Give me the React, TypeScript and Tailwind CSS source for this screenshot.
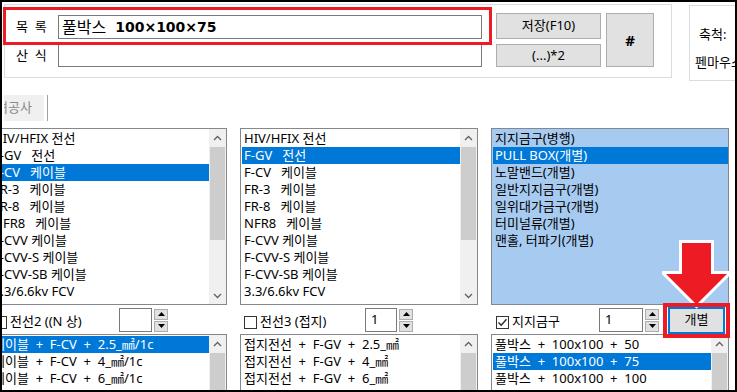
import React from "react";

const CABLES = [
  "HIV/HFIX 전선",
  "F-GV   전선",
  "F-CV   케이블",
  "FR-3   케이블",
  "FR-8   케이블",
  "NFR8   케이블",
  "F-CVV 케이블",
  "F-CVV-S 케이블",
  "F-CVV-SB 케이블",
  "3.3/6.6kv FCV",
];

const SUPPORTS = [
  "지지금구(병행)",
  "PULL BOX(개별)",
  "노말밴드(개별)",
  "일반지지금구(개별)",
  "일위대가금구(개별)",
  "터미널류(개별)",
  "맨홀, 터파기(개별)",
];

const WIRE2 = ["케이블  +  F-CV  +  2.5_㎟/1c", "케이블  +  F-CV  +  4_㎟/1c", "케이블  +  F-CV  +  6_㎟/1c"];
const WIRE3 = ["접지전선  +  F-GV  +  2.5_㎟", "접지전선  +  F-GV  +  4_㎟", "접지전선  +  F-GV  +  6_㎟"];
const BOXES = ["풀박스  +  100x100  +  50", "풀박스  +  100x100  +  75", "풀박스  +  100x100  +  100"];

function Chevron({ down }: { down?: boolean }) {
  return (
    <svg width="9" height="6" viewBox="0 0 9 6" className={down ? "rotate-180" : ""}>
      <path d="M1 5 L4.5 1.5 L8 5" fill="none" stroke="#606060" strokeWidth="1.3" />
    </svg>
  );
}

function ScrollBar({ thumb }: { thumb: string }) {
  return (
    <div className="flex w-[17px] shrink-0 flex-col bg-[#f0f0f0]">
      <div className="flex h-[17px] shrink-0 items-center justify-center">
        <Chevron />
      </div>
      <div className={`mx-[1px] mt-[1px] shrink-0 bg-[#cdcdcd] ${thumb}`} />
      <div className="flex-1" />
      <div className="flex h-[17px] shrink-0 items-center justify-center">
        <Chevron down />
      </div>
    </div>
  );
}

function ListBox({
  items,
  selected,
  blue,
  thumb,
  h,
}: {
  items: string[];
  selected: number;
  blue?: boolean;
  thumb?: string;
  h: string;
}) {
  return (
    <div className={`flex overflow-hidden border border-[#828790] ${blue ? "bg-[#a6caf0]" : "bg-white"} ${h}`}>
      <div className="min-w-0 flex-1 overflow-hidden pl-[1px] pt-[1px]">
        {items.map((t, i) => (
          <div
            key={i}
            className={`h-[17px] whitespace-pre pl-[2px] leading-[17px] ${
              i === selected ? "bg-[#0078d7] text-white" : "text-black"
            }`}
          >
            {t}
          </div>
        ))}
      </div>
      {thumb && <ScrollBar thumb={thumb} />}
    </div>
  );
}

function CheckBox({ checked }: { checked?: boolean }) {
  return (
    <div className="flex h-[13px] w-[13px] shrink-0 items-center justify-center border border-[#333] bg-white">
      {checked && (
        <svg width="11" height="11" viewBox="0 0 11 11">
          <path d="M1.5 5.5 L4.2 8.3 L9.5 2.2" fill="none" stroke="#222" strokeWidth="1.3" />
        </svg>
      )}
    </div>
  );
}

function Spin() {
  const btn = "flex h-[11px] w-[14px] items-center justify-center border border-[#adadad] bg-[#e1e1e1]";
  return (
    <div className="ml-[2px] flex flex-col gap-[1px]">
      <div className={btn}>
        <svg width="7" height="4" viewBox="0 0 7 4">
          <path d="M0 4 L3.5 0 L7 4 Z" fill="#000" />
        </svg>
      </div>
      <div className={btn}>
        <svg width="7" height="4" viewBox="0 0 7 4">
          <path d="M0 0 L3.5 4 L7 0 Z" fill="#000" />
        </svg>
      </div>
    </div>
  );
}

function Controls({
  ml,
  labelW,
  inputW,
  label,
  value,
  checked,
  children,
}: {
  ml: string;
  labelW: string;
  inputW: string;
  label: string;
  value: string;
  checked?: boolean;
  children?: React.ReactNode;
}) {
  return (
    <div className="mt-[3px] flex h-[24px] items-center">
      <div className={`${ml} mt-[4px]`}>
        <CheckBox checked={checked} />
      </div>
      <div className={`ml-[3px] mt-[3px] whitespace-pre text-[13px] leading-[17px] ${labelW}`}>{label}</div>
      <div className={`flex h-[24px] items-center border border-[#7a7a7a] bg-white pl-[5px] text-[13px] ${inputW}`}>
        {value}
      </div>
      <Spin />
      {children}
    </div>
  );
}

function Button({ className, children }: { className: string; children: React.ReactNode }) {
  return (
    <div className={`flex items-center justify-center border border-[#adadad] bg-[#e1e1e1] text-[13px] text-black ${className}`}>
      {children}
    </div>
  );
}

export default function App() {
  return (
    <div className="relative h-[392px] w-[737px] overflow-hidden border-2 border-black bg-white font-['Noto_Sans','Noto_Sans_CJK_KR',sans-serif] text-[13px] text-black">
      {/* header panels */}
      <div className="flex h-[79px] items-start">
        <div className="ml-[2px] mt-[2px] flex h-[74px] w-[668px] shrink-0 items-start border border-[#dcdcdc] pl-[10px] pt-[8px]">
          <div className="flex flex-col">
            <div className="mt-[2px] flex h-[24px] items-center">
              <div className="w-[43px] whitespace-pre pl-[1px] text-[13px]">목  록</div>
              <div className="flex h-[24px] w-[424px] items-center border border-[#7a7a7a] bg-white pl-[3px]">
                <span className="text-[16px]">풀박스</span>
                <span className="ml-[9px] font-['DejaVu_Sans','Noto_Sans_CJK_KR',sans-serif] text-[14px] font-bold">
                  100×100×75
                </span>
              </div>
            </div>
            <div className="mt-[5px] flex h-[23px] items-center">
              <div className="w-[43px] whitespace-pre pl-[1px] text-[13px]">산  식</div>
              <div className="h-[23px] w-[424px] border border-[#7a7a7a] bg-white" />
            </div>
          </div>
          <div className="ml-[14px] flex flex-col">
            <Button className="h-[26px] w-[105px]">저장(F10)</Button>
            <Button className="mt-[5px] h-[23px] w-[105px]">(...)*2</Button>
          </div>
          <Button className="ml-[5px] h-[54px] w-[48px] text-[15px] font-bold">#</Button>
        </div>
        <div className="ml-[17px] mt-[3px] flex h-[76px] w-[80px] shrink-0 flex-col border border-[#dcdcdc] pl-[5px] pt-[14px] leading-[28px]">
          <div className="pl-[4px]">축척:</div>
          <div>펜마우스</div>
        </div>
      </div>

      {/* tab strip */}
      <div className="mt-[14px] flex h-[26px] items-stretch">
        <div className="ml-[2px] flex w-[40px] items-center overflow-hidden bg-[#f0f0f0] text-[#8a8a8a]">
          <span className="-ml-[8px] whitespace-nowrap">녀공사</span>
        </div>
        <div className="ml-[3px] w-[1px] bg-[#a0a0a0]" />
      </div>

      {/* three list columns */}
      <div className="-ml-[13px] mt-[7px] grid grid-cols-[238px_238px_238px] gap-x-[13px]">
        <div className="flex flex-col">
          <ListBox items={CABLES} selected={2} thumb="h-[93px]" h="h-[177px]" />
          <Controls ml="ml-[5px]" labelW="w-[109px]" inputW="w-[33px]" label="전선2 ((N 상)" value="" />
          <div className="mt-[2px]">
            <ListBox items={WIRE2} selected={0} thumb="h-[80px]" h="h-[60px]" />
          </div>
        </div>
        <div className="flex flex-col">
          <ListBox items={CABLES} selected={1} thumb="h-[93px]" h="h-[177px]" />
          <Controls ml="ml-[4px]" labelW="w-[105px]" inputW="w-[32px]" label="전선3 (접지)" value="1" />
          <div className="mt-[2px]">
            <ListBox items={WIRE3} selected={-1} thumb="h-[80px]" h="h-[60px]" />
          </div>
        </div>
        <div className="flex flex-col">
          <ListBox items={SUPPORTS} selected={1} blue h="h-[177px]" />
          <Controls ml="ml-[5px]" labelW="w-[87px]" inputW="w-[44px]" label="지지금구" value="1" checked>
            <div className="ml-[9px] flex h-[27px] w-[57px] items-center justify-center border-2 border-[#0078d7] bg-[#e1e1e1] text-[13px]">
              개별
            </div>
          </Controls>
          <div className="mt-[2px]">
            <ListBox items={BOXES} selected={1} thumb="h-[80px]" h="h-[60px]" />
          </div>
        </div>
      </div>

      {/* annotation overlays */}
      <div className="absolute left-[1px] top-[5px] h-[38px] w-[489px] border-[3px] border-[#ed1c24]" />
      <svg className="absolute left-[660px] top-[238px]" width="72" height="70" viewBox="0 0 72 70">
        <polygon
          points="20,3 49,3 49,34 65,34 34.5,64.5 4,34 20,34"
          fill="#ed1c24"
          stroke="#fff"
          strokeWidth="6"
          strokeLinejoin="miter"
          paintOrder="stroke"
        />
      </svg>
      <div className="absolute left-[661px] top-[301px] h-[35px] w-[67px] border-4 border-[#ed1c24]" />
    </div>
  );
}
